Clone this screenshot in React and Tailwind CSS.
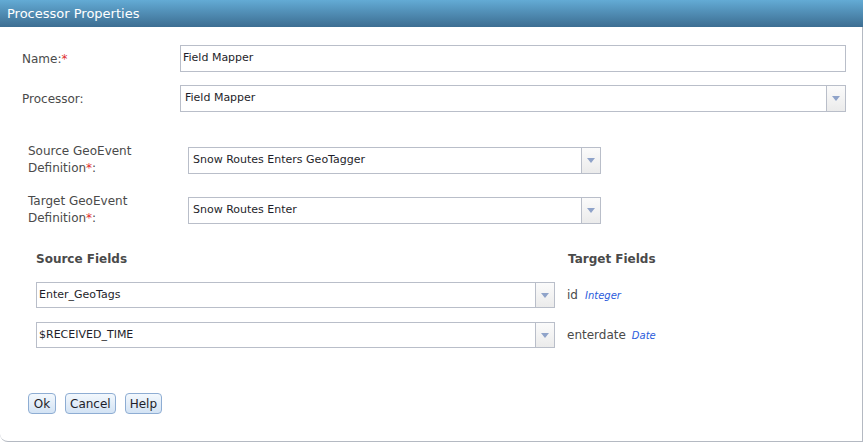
import React from "react";

const font = { fontFamily: '"DejaVu Sans", Verdana, sans-serif' };

function Req() {
  return <span className="text-[#e0302f]">*</span>;
}

function Arrow() {
  return (
    <svg width="8" height="5" viewBox="0 0 8 5">
      <path d="M0 0H8L4 5Z" fill="#8fa3c9" />
    </svg>
  );
}

function TextBox({ value, className = "" }) {
  return (
    <div
      className={`h-[27px] border border-[#b9bec9] bg-white flex items-center pl-[2px] text-[11px] text-[#1e1e2a] ${className}`}
    >
      {value}
    </div>
  );
}

function Select({ value, className = "", h = "h-[27px]", pad = "pl-[4px]" }) {
  return (
    <div className={`${h} border border-[#b9bec9] bg-white flex ${className}`}>
      <div className={`flex-1 flex items-center ${pad} text-[11px] text-[#1e1e2a]`}>{value}</div>
      <div className="w-[19px] border-l border-[#b9bec9] bg-gradient-to-b from-[#fbfbfb] to-[#ebebeb] flex items-center justify-center">
        <Arrow />
      </div>
    </div>
  );
}

function Btn({ children }) {
  return (
    <button className="h-[21px] min-w-[28px] px-[4px] rounded-[4px] border border-[#8eadd3] bg-gradient-to-b from-[#f3f8fd] to-[#d3e3f4] text-[12px] text-[#1e1e2a] leading-none">
      {children}
    </button>
  );
}

export default function App() {
  return (
    <div className="w-[863px] h-[443px] bg-white" style={font}>
      <div className="h-[27px] bg-gradient-to-b from-[#63abd5] to-[#3d6e92] flex items-center pl-[7px] text-[13px] text-white">
        Processor Properties
      </div>
      <div className="h-[415px] border-r border-b border-[#b4b9c2] rounded-bl-[8px] flex flex-col text-[12px] text-[#4a4a4a]">
        <div className="mt-[18px] flex items-center pr-[16px]">
          <div className="w-[180px] pl-[22px]">
            Name:<Req />
          </div>
          <TextBox value="Field Mapper" className="flex-1" />
        </div>
        <div className="mt-[13px] flex items-center pr-[16px]">
          <div className="w-[180px] pl-[22px]">Processor:</div>
          <Select value="Field Mapper" className="flex-1" />
        </div>

        <div className="mt-[31px] flex items-center">
          <div className="w-[188px] pl-[28px] leading-[17px]">
            Source GeoEvent
            <br />
            Definition<Req />:
          </div>
          <Select value="Snow Routes Enters GeoTagger" className="w-[413px]" />
        </div>
        <div className="mt-[16px] flex items-center">
          <div className="w-[188px] pl-[28px] leading-[17px]">
            Target GeoEvent
            <br />
            Definition<Req />:
          </div>
          <Select value="Snow Routes Enter" className="w-[413px]" />
        </div>

        <div className="mt-[24px] pl-[36px] grid grid-cols-[519px_1fr] gap-x-[12px]">
          <div className="font-bold text-[#4a4a4a] h-[16px] leading-[16px]">Source Fields</div>
          <div className="font-bold text-[#4a4a4a] h-[16px] leading-[16px] pl-[1px]">Target Fields</div>

          <Select value="Enter_GeoTags" className="mt-[15px]" h="h-[26px]" pad="pl-[2px]" />
          <div className="mt-[15px] flex items-center gap-[7px]">
            <span>id</span>
            <span className="italic text-[10px] text-[#2a5bdc]">Integer</span>
          </div>

          <Select value="$RECEIVED_TIME" className="mt-[14px]" h="h-[26px]" pad="pl-[2px]" />
          <div className="mt-[14px] flex items-center gap-[6px]">
            <span>enterdate</span>
            <span className="italic text-[10px] text-[#2a5bdc]">Date</span>
          </div>
        </div>

        <div className="mt-[45px] pl-[28px] flex gap-[9px]">
          <Btn>Ok</Btn>
          <Btn>Cancel</Btn>
          <Btn>Help</Btn>
        </div>
      </div>
    </div>
  );
}
